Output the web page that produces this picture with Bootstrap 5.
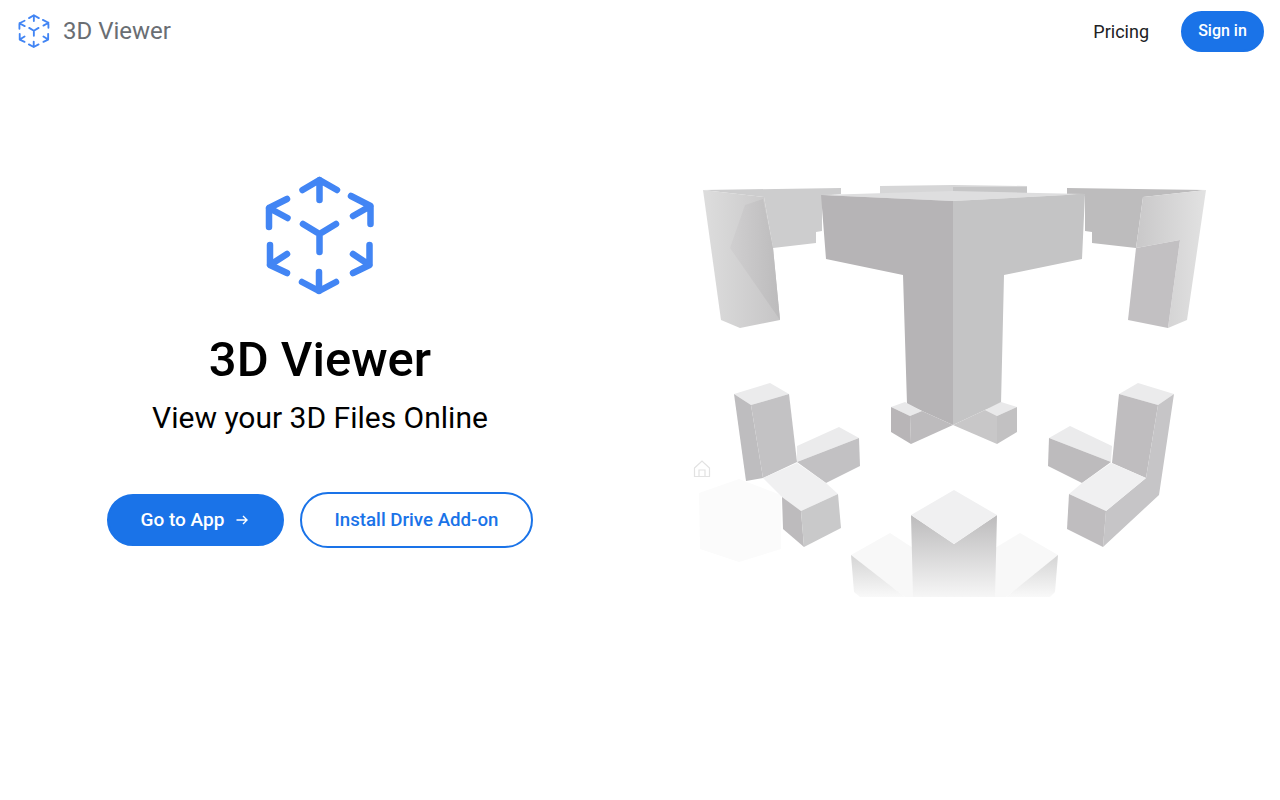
<!DOCTYPE html>
<html>
<head>
  <meta charset="utf-8">
  <link href="https://cdn.jsdelivr.net/npm/bootstrap@5.3.3/dist/css/bootstrap.min.css" rel="stylesheet">
  <script src="https://cdn.jsdelivr.net/npm/bootstrap@5.3.3/dist/js/bootstrap.bundle.min.js"></script>
  <title>3D Viewer</title>
  <style>
    body {
      font-family: Roboto, "Open Sans", sans-serif;
      background-color: #fff;
    }
    .top-bar {
      height: 62px;
      padding: 0 16px 0 14px;
    }
    .brand-name {
      color: #6a6e73;
      font-size: 24px;
      margin-left: 9px;
      text-decoration: none;
    }
    .price-link {
      color: #202124;
      font-size: 18px;
      margin-right: 32px;
      text-decoration: none;
    }
    .pill-btn {
      background-color: #1a73e8;
      border: 2px solid #1a73e8;
      border-radius: 28px;
      color: #fff;
      font-weight: 500;
    }
    .pill-btn:hover {
      background-color: #1a73e8;
      color: #fff;
    }
    .sign-btn {
      font-size: 16px;
      height: 41px;
      padding: 0;
      width: 83px;
    }
    .hero-left {
      padding-top: 103px;
    }
    .hero-right {
      padding-left: 50px;
      padding-top: 108px;
    }
    .hero-title {
      color: #000;
      font-size: 49px;
      font-weight: 500;
      line-height: 56px;
      margin: 27px 0 0;
    }
    .hero-sub {
      color: #000;
      font-size: 30px;
      font-weight: 400;
      line-height: 40px;
      margin: 10px 0 0;
    }
    .hero-actions {
      gap: 16px;
      margin-top: 54px;
    }
    .go-btn {
      font-size: 19px;
      gap: 10px;
      height: 52px;
      width: 177px;
    }
    .drive-btn {
      background-color: #fff;
      color: #1a73e8;
      font-size: 18.7px;
      height: 56px;
      width: 233px;
    }
    .drive-btn:hover {
      background-color: #fff;
      color: #1a73e8;
    }
    .logo-lines {
      fill: none;
      stroke: #4285f4;
      stroke-linecap: round;
      stroke-linejoin: round;
      stroke-width: 6.5;
    }
    .scene-art {
      display: block;
      filter: blur(0.5px);
    }
  </style>
</head>
<body>
  <!-- Hidden symbol so the logo is only drawn once -->
  <svg width="0" height="0" class="position-absolute">
    <symbol id="logoMark" viewBox="0 0 140 140">
      <g class="logo-lines">
        <path d="M69.5 15V35M52.5 25L69.5 15L87 25"/>
        <path d="M37 34L19 43V62M19 43L37.5 53"/>
        <path d="M101 31L120.5 41V59M120.5 41L103 51"/>
        <path d="M20 80V100L37 108M20 100L37 89"/>
        <path d="M119.5 80V100L103 108M119.5 100L103 89"/>
        <path d="M69 107V126M52 117L69 126L86 117"/>
        <path d="M53 59L69.5 69L86 59M69.5 69V87"/>
      </g>
    </symbol>
  </svg>

  <!-- Top bar -->
  <nav class="top-bar d-flex align-items-center justify-content-between">
    <div class="d-flex align-items-center">
      <svg width="40" height="40"><use href="#logoMark"/></svg>
      <a class="brand-name" href="#">3D Viewer</a>
    </div>
    <div class="d-flex align-items-center">
      <a class="price-link" href="#">Pricing</a>
      <a class="btn pill-btn sign-btn d-flex align-items-center justify-content-center" href="#">Sign in</a>
    </div>
  </nav>

  <main class="row g-0">
    <!-- Intro -->
    <div class="col-6 hero-left d-flex flex-column align-items-center text-center">
      <svg width="140" height="140"><use href="#logoMark"/></svg>
      <h1 class="hero-title">3D Viewer</h1>
      <h2 class="hero-sub">View your 3D Files Online</h2>
      <div class="hero-actions d-flex align-items-center">
        <a class="btn pill-btn go-btn d-flex align-items-center justify-content-center" href="#">
          Go to App
          <svg width="16" height="16" viewBox="0 0 16 16" fill="none" stroke="#fff" stroke-width="1.4"><path d="M2.5 8H13M9 4L13 8L9 12"/></svg>
        </a>
        <a class="btn pill-btn drive-btn d-flex align-items-center justify-content-center" href="#">Install Drive Add-on</a>
      </div>
    </div>

    <!-- 3D model preview -->
    <div class="col-6 hero-right">
      <svg class="scene-art" width="530" height="440" viewBox="690 170 530 440">
        <defs>
          <linearGradient id="legLeft" x1="0" x2="1" y1="0" y2="0">
            <stop offset="0" stop-color="#dddddd"/>
            <stop offset="1" stop-color="#c6c5c6"/>
          </linearGradient>
          <linearGradient id="legShade" x1="0" x2="1" y1="0" y2="0">
            <stop offset="0" stop-color="#d0cfd0"/>
            <stop offset="1" stop-color="#bcbbbc"/>
          </linearGradient>
          <linearGradient id="legRight" x1="0" x2="1" y1="0" y2="0">
            <stop offset="0" stop-color="#c9c8c9"/>
            <stop offset="1" stop-color="#e2e2e2"/>
          </linearGradient>
          <linearGradient id="fadeDark" x1="0" x2="0" y1="0" y2="1">
            <stop offset="0" stop-color="#bcbbbc"/>
            <stop offset="1" stop-color="#f6f6f6"/>
          </linearGradient>
          <linearGradient id="fadeSide" x1="0" x2="0" y1="0" y2="1">
            <stop offset="0" stop-color="#d4d4d4"/>
            <stop offset="1" stop-color="#f9f9f9"/>
          </linearGradient>
        </defs>

        <!-- back beam -->
        <polygon fill="#d6d6d7" points="880,186 953,185 1027,186 1027,194 880,194"/>
        <polygon fill="#c6c6c7" points="953,187 1027,187 1027,194 953,194"/>

        <!-- top left arm -->
        <polygon fill="#cdcdce" points="703,190 841,188 841,194 822,196 822,231 816,232 816,243 773,248 764,197"/>
        <polygon fill="url(#legLeft)" points="703,190 764,197 773,248 780,320 740,328 721,320"/>
        <polygon fill="url(#legShade)" points="763,199 773,248 780,320 730,248 745,205"/>

        <!-- top right arm -->
        <polygon fill="#bdbcbd" points="1067,188 1206,190 1143,197 1136,248 1092,243 1092,232 1085,231 1085,196 1067,194"/>
        <polygon fill="url(#legRight)" points="1143,197 1206,190 1187,320 1168,328 1180,240 1136,248"/>
        <polygon fill="#c2c0c2" points="1136,248 1180,240 1168,328 1128,320"/>

        <!-- centre T -->
        <polygon fill="#dededf" points="821,195 953,191 1085,194 953,201"/>
        <polygon fill="#b6b4b6" points="821,195 953,201 953,425 922,411 907,404 903,275 826,259"/>
        <polygon fill="#c4c4c5" points="953,201 1085,194 1082,259 1004,275 1001,404 985,410 953,425"/>
        <polygon fill="#e9e9ea" points="891,407 905,402 922,411 910,416"/>
        <polygon fill="#b8b5b7" points="891,407 910,416 911,444 891,432"/>
        <polygon fill="#bdbbbd" points="910,416 922,411 953,425 911,444"/>
        <polygon fill="#e9e9ea" points="1017,407 1001,402 985,410 997,416"/>
        <polygon fill="#c2c1c2" points="1017,407 997,416 997,444 1017,432"/>
        <polygon fill="#c8c7c8" points="997,416 985,410 953,425 997,444"/>

        <!-- lower left block -->
        <polygon fill="#ebebec" points="734,394 770,383 789,394 751,405"/>
        <polygon fill="#bebdbf" points="734,394 751,405 763,478 746,481"/>
        <polygon fill="#c3c2c4" points="751,405 789,394 797,462 763,478"/>
        <polygon fill="#ebebec" points="797,446 839,427 859,438 797,462"/>
        <polygon fill="#c2c1c3" points="797,462 859,438 860,466 826,483"/>
        <!-- faded cube sitting in front -->
        <polygon fill="#fbfbfb" points="699,493 739,479 781,495 781,549 739,562 700,549"/>
        <polygon fill="#f0f0f1" points="797,463 826,483 838,494 801,511 782,497 763,478"/>
        <polygon fill="#bdbbbd" points="782,497 801,511 804,547 783,529"/>
        <polygon fill="#c9c9ca" points="801,511 838,494 841,528 804,547"/>

        <!-- small home mark -->
        <path d="M694.5 468L702 461L709.5 468V476.5H694.5ZM699 476.5V470H705V476.5" fill="none" stroke="#e2e2e2" stroke-width="1.2"/>

        <!-- lower right block -->
        <polygon fill="#ebebec" points="1119,394 1138,383 1174,394 1158,405"/>
        <polygon fill="#bfbdbf" points="1119,394 1158,405 1146,478 1112,463"/>
        <polygon fill="#c6c5c7" points="1158,405 1174,394 1159,495 1103,547 1106,511 1146,478"/>
        <polygon fill="#ebebec" points="1049,438 1070,426 1112,446 1111,462"/>
        <polygon fill="#bdbbbd" points="1049,438 1111,462 1082,483 1048,466"/>
        <polygon fill="#f0f0f1" points="1111,463 1146,478 1106,511 1069,494 1082,483"/>
        <polygon fill="#bfbdbf" points="1069,494 1106,511 1103,547 1067,529"/>

        <!-- bottom block, fades out -->
        <polygon fill="#f8f8f8" points="851,555 890,533 913,548 913,597 905,597"/>
        <polygon fill="#f8f8f8" points="1058,555 1020,533 995,548 995,597 1006,597"/>
        <polygon fill="url(#fadeSide)" points="851,555 905,597 860,597 854,592"/>
        <polygon fill="url(#fadeSide)" points="1058,555 1006,597 1050,597 1055,592"/>
        <polygon fill="url(#fadeDark)" points="911,515 954,544 997,515 995,597 913,597"/>
        <polygon fill="#f0f0f1" points="954,490 997,515 954,544 911,515"/>
      </svg>
    </div>
  </main>
</body>
</html>
